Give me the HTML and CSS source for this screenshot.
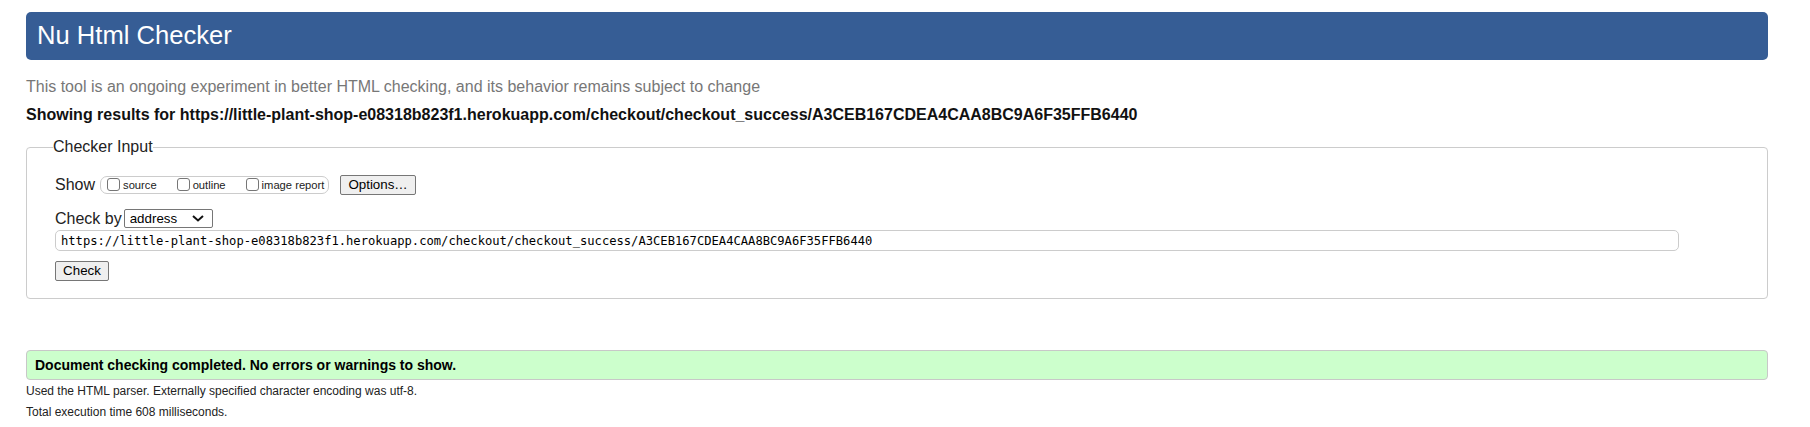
FILE: index.html
```html
<!DOCTYPE html>
<html lang="en">
<head>
<meta charset="utf-8">
<title>Showing results for https://little-plant-shop-e08318b823f1.herokuapp.com/checkout/checkout_success/A3CEB167CDEA4CAA8BC9A6F35FFB6440 - Nu Html Checker</title>
<link rel="stylesheet" href="styles.css">
</head>
<body>
<h1 class="title">Nu Html Checker</h1>
<p class="intro">This tool is an ongoing experiment in better HTML checking, and its behavior remains subject to change</p>
<p class="showing">Showing results for https://little-plant-shop-e08318b823f1.herokuapp.com/checkout/checkout_success/A3CEB167CDEA4CAA8BC9A6F35FFB6440</p>
<form class="checker">
  <fieldset class="checker-fs">
    <legend class="checker-legend">Checker Input</legend>
    <div class="row row-show">
      <span class="row-label">Show</span>
      <span class="show-group">
        <label class="opt"><input type="checkbox" class="cb">source</label>
        <label class="opt"><input type="checkbox" class="cb">outline</label>
        <label class="opt opt-last"><input type="checkbox" class="cb">image report</label>
      </span>
      <button type="button" class="btn btn-options">Options…</button>
    </div>
    <div class="row row-checkby">
      <span class="row-label">Check by</span>
      <span class="select-wrap">
        <select class="select"><option>address</option></select>
        <svg class="chev" width="12" height="7" viewBox="0 0 12 7" aria-hidden="true"><path d="M1 1 L6 5.5 L11 1" fill="none" stroke="#111" stroke-width="2"/></svg>
      </span>
    </div>
    <input class="url" type="text" value="https://little-plant-shop-e08318b823f1.herokuapp.com/checkout/checkout_success/A3CEB167CDEA4CAA8BC9A6F35FFB6440">
    <div class="row-submit"><button type="button" class="btn btn-check">Check</button></div>
  </fieldset>
</form>
<div class="success">Document checking completed. No errors or warnings to show.</div>
<p class="details details-first">Used the HTML parser. Externally specified character encoding was utf-8.</p>
<p class="details">Total execution time 608 milliseconds.</p>
</body>
</html>
```
FILE: styles.css
```css
html, body {
  background: #fff;
}
body {
  margin: 0;
  padding: 0 42px 0 26px;
  font-family: "Liberation Sans", Arial, sans-serif;
  font-size: 16px;
  color: #000;
}
.title {
  margin: 12px 0 0 0;
  height: 48px;
  box-sizing: border-box;
  padding: 0 0 2px 11px;
  line-height: 46px;
  background: #365d95;
  color: #fff;
  font-size: 25.6px;
  font-weight: normal;
  border-radius: 5px;
}
.intro {
  margin: 18px 0 0 0;
  line-height: 18px;
  color: #777;
}
.showing {
  margin: 10px 0 0 0;
  line-height: 18px;
  font-weight: bold;
  color: #111;
}
.checker {
  margin: 14px 0 0 0;
}
.checker-fs {
  margin: 0;
  padding: 19px 28px 17px 28px;
  border: 1px solid #ccc;
  border-radius: 4px;
  min-width: 0;
}
.checker-legend {
  padding: 0;
  margin-left: -2px;
  line-height: 18px;
  font-size: 16px;
  color: #222;
}
.row {
  display: flex;
  align-items: center;
}
.row-label {
  line-height: 18px;
  color: #222;
}
.row-show {
  height: 20px;
}
.show-group {
  display: inline-flex;
  align-items: center;
  height: 18px;
  box-sizing: border-box;
  margin-left: 5px;
  padding: 0 4px 0 2px;
  border: 1px solid #ccc;
  border-radius: 7px;
  font-size: 11.2px;
  color: #222;
}
.opt {
  display: inline-flex;
  align-items: center;
  margin-right: 16px;
}
.opt-last {
  margin-right: 0;
}
.cb {
  appearance: none;
  width: 13px;
  height: 13px;
  margin: 0 3px 1px 4px;
  border: 1px solid #767676;
  border-radius: 3px;
  background: #fff;
  box-sizing: border-box;
}
.btn {
  font-family: "Liberation Sans", Arial, sans-serif;
  font-size: 13.333px;
  color: #000;
  height: 20px;
  box-sizing: border-box;
  border: 1px solid #767676;
  border-radius: 2px;
  background: #efefef;
  line-height: 16px;
  padding: 0 8px;
}
.btn-options {
  margin-left: 11px;
  padding: 0 7px;
}
.row-checkby {
  margin-top: 14px;
  height: 19px;
}
.select-wrap {
  position: relative;
  display: inline-block;
  margin-left: 2px;
  height: 19px;
}
.select {
  appearance: none;
  width: 89px;
  height: 19px;
  box-sizing: border-box;
  margin: 0;
  padding: 0 0 0 5px;
  border: 1px solid #767676;
  border-radius: 2px;
  background: #fff;
  font-family: "Liberation Sans", Arial, sans-serif;
  font-size: 13.333px;
  color: #000;
  line-height: 17px;
}
.chev {
  position: absolute;
  right: 9px;
  top: 6px;
  pointer-events: none;
}
.url {
  display: block;
  margin: 2px 0 0 0;
  width: calc(100% - 60px);
  height: 21px;
  box-sizing: border-box;
  padding: 0 5px;
  border: 1px solid #ccc;
  border-radius: 5px;
  font-family: "DejaVu Sans Mono", "Liberation Mono", monospace;
  font-size: 12.15px;
  color: #000;
  background: #fff;
}
.row-submit {
  margin-top: 10px;
  height: 20px;
}
.btn-check {
  padding: 0 7px;
  width: 54px;
}
.success {
  margin-top: 51px;
  height: 30px;
  box-sizing: border-box;
  padding: 0 8px;
  line-height: 28px;
  background: #ccffcc;
  border: 1px solid #c8c8c8;
  border-radius: 4px;
  font-size: 14px;
  font-weight: bold;
  color: #000;
}
.details {
  margin: 0;
  font-size: 12px;
  line-height: 21px;
  color: #222;
}
.details-first {
  margin-top: 1px;
}
```
